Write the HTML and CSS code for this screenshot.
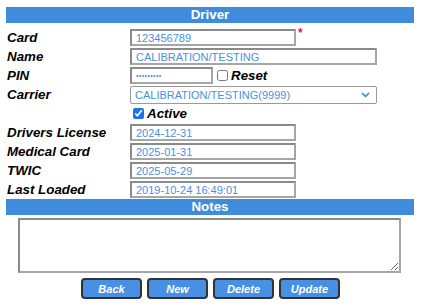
FILE: index.html
```html
<!DOCTYPE html>
<html lang="en">
<head>
    <meta charset="UTF-8">
    <title>Driver</title>
    <link rel="stylesheet" href="styles.css">
</head>
<body>
    <div class="driver-form">
        <div class="section-title">Driver</div>

        <div class="field-grid">
            <label class="field-label">Card</label>
            <div class="field-value">
                <input class="text-input short" type="text" value="123456789">
                <span class="required">*</span>
            </div>

            <label class="field-label">Name</label>
            <div class="field-value">
                <input class="text-input long" type="text" value="CALIBRATION/TESTING">
            </div>

            <label class="field-label">PIN</label>
            <div class="field-value">
                <input class="text-input pin" type="password" value="123456789">
                <label class="check-label"><input type="checkbox" class="check"> Reset</label>
            </div>

            <label class="field-label">Carrier</label>
            <div class="field-value">
                <div class="select-box">
                    <span>CALIBRATION/TESTING(9999)</span>
                    <svg class="chevron" viewBox="0 0 10 6" fill="none" stroke="currentColor" stroke-width="1.8" stroke-linecap="round" stroke-linejoin="round">
                        <path d="M1.5 1.2L5 4.6 8.5 1.2"></path>
                    </svg>
                </div>
            </div>

            <span></span>
            <div class="field-value">
                <label class="check-label active"><input type="checkbox" class="check" checked> Active</label>
            </div>

            <label class="field-label">Drivers License</label>
            <div class="field-value">
                <input class="text-input short" type="text" value="2024-12-31">
            </div>

            <label class="field-label">Medical Card</label>
            <div class="field-value">
                <input class="text-input short" type="text" value="2025-01-31">
            </div>

            <label class="field-label">TWIC</label>
            <div class="field-value">
                <input class="text-input short" type="text" value="2025-05-29">
            </div>

            <label class="field-label">Last Loaded</label>
            <div class="field-value">
                <input class="text-input short" type="text" value="2019-10-24 16:49:01">
            </div>
        </div>

        <div class="section-title">Notes</div>
        <div class="notes-wrap">
            <textarea class="notes"></textarea>
        </div>

        <div class="button-row">
            <button class="action-button">Back</button>
            <button class="action-button">New</button>
            <button class="action-button">Delete</button>
            <button class="action-button">Update</button>
        </div>
    </div>
</body>
</html>
```

FILE: styles.css
```css
body {
    margin: 0;
    padding: 0;
    background-color: #fff;
    font-family: "Liberation Sans", Arial, sans-serif;
    color: #000;
}

.driver-form {
    width: 408px;
    padding: 7px 0 0 6px;
}

.section-title {
    height: 16px;
    line-height: 16px;
    background-color: #3f8cdd;
    color: #fff;
    font-weight: bold;
    font-size: 13.33px;
    text-align: center;
}

.field-grid {
    display: grid;
    grid-template-columns: 124px 1fr;
    grid-auto-rows: 19px;
    padding-top: 5px;
}

.field-label {
    font-weight: bold;
    font-style: italic;
    font-size: 13.33px;
    line-height: 19px;
    padding-left: 1px;
}

.field-value {
    display: flex;
    align-items: center;
}

.text-input {
    box-sizing: border-box;
    height: 17px;
    margin: 0;
    padding: 0 4px;
    border: 2px solid #a6a6a6;
    border-top-color: #8a8a8a;
    border-left-color: #8a8a8a;
    font-family: "Liberation Sans", Arial, sans-serif;
    font-size: 11px;
    color: #4a90e2;
    outline: none;
}

.text-input.short {
    width: 166px;
}

.text-input.long {
    width: 247px;
}

.text-input.pin {
    width: 83px;
    font-size: 7px;
    letter-spacing: 0.4px;
}

.required {
    color: #e8231f;
    font-size: 12px;
    font-weight: bold;
    align-self: flex-start;
    margin: 0 0 0 2px;
    line-height: 10px;
}

.check-label {
    display: flex;
    align-items: center;
    font-weight: bold;
    font-style: italic;
    font-size: 13.33px;
    margin-left: 4px;
}

.check-label.active {
    margin-left: 3px;
}

.check {
    width: 11px;
    height: 11px;
    margin: 0 3px 0 0;
    accent-color: #1a73e8;
}

.select-box {
    box-sizing: border-box;
    width: 247px;
    height: 18px;
    display: flex;
    align-items: center;
    justify-content: space-between;
    padding: 0 6px 0 4px;
    border: 1px solid #9a9a9a;
    border-radius: 2px;
    font-size: 11px;
    color: #4a90e2;
}

.chevron {
    width: 9px;
    height: 6px;
    color: #3f8cdd;
}

.notes-wrap {
    padding: 3px 0 0 12px;
    height: 55px;
}

.notes {
    box-sizing: border-box;
    width: 383px;
    height: 55px;
    margin: 0;
    border: 2px solid #a6a6a6;
    border-top-color: #8a8a8a;
    border-left-color: #8a8a8a;
    resize: both;
}

.button-row {
    display: flex;
    gap: 5px;
    padding: 5px 0 0 75px;
}

.action-button {
    box-sizing: border-box;
    width: 61px;
    height: 21px;
    padding: 0;
    background-color: #4790e3;
    border: 2px solid #333;
    border-radius: 4px;
    color: #fff;
    font-family: "Liberation Sans", Arial, sans-serif;
    font-weight: bold;
    font-style: italic;
    font-size: 11px;
}
```
